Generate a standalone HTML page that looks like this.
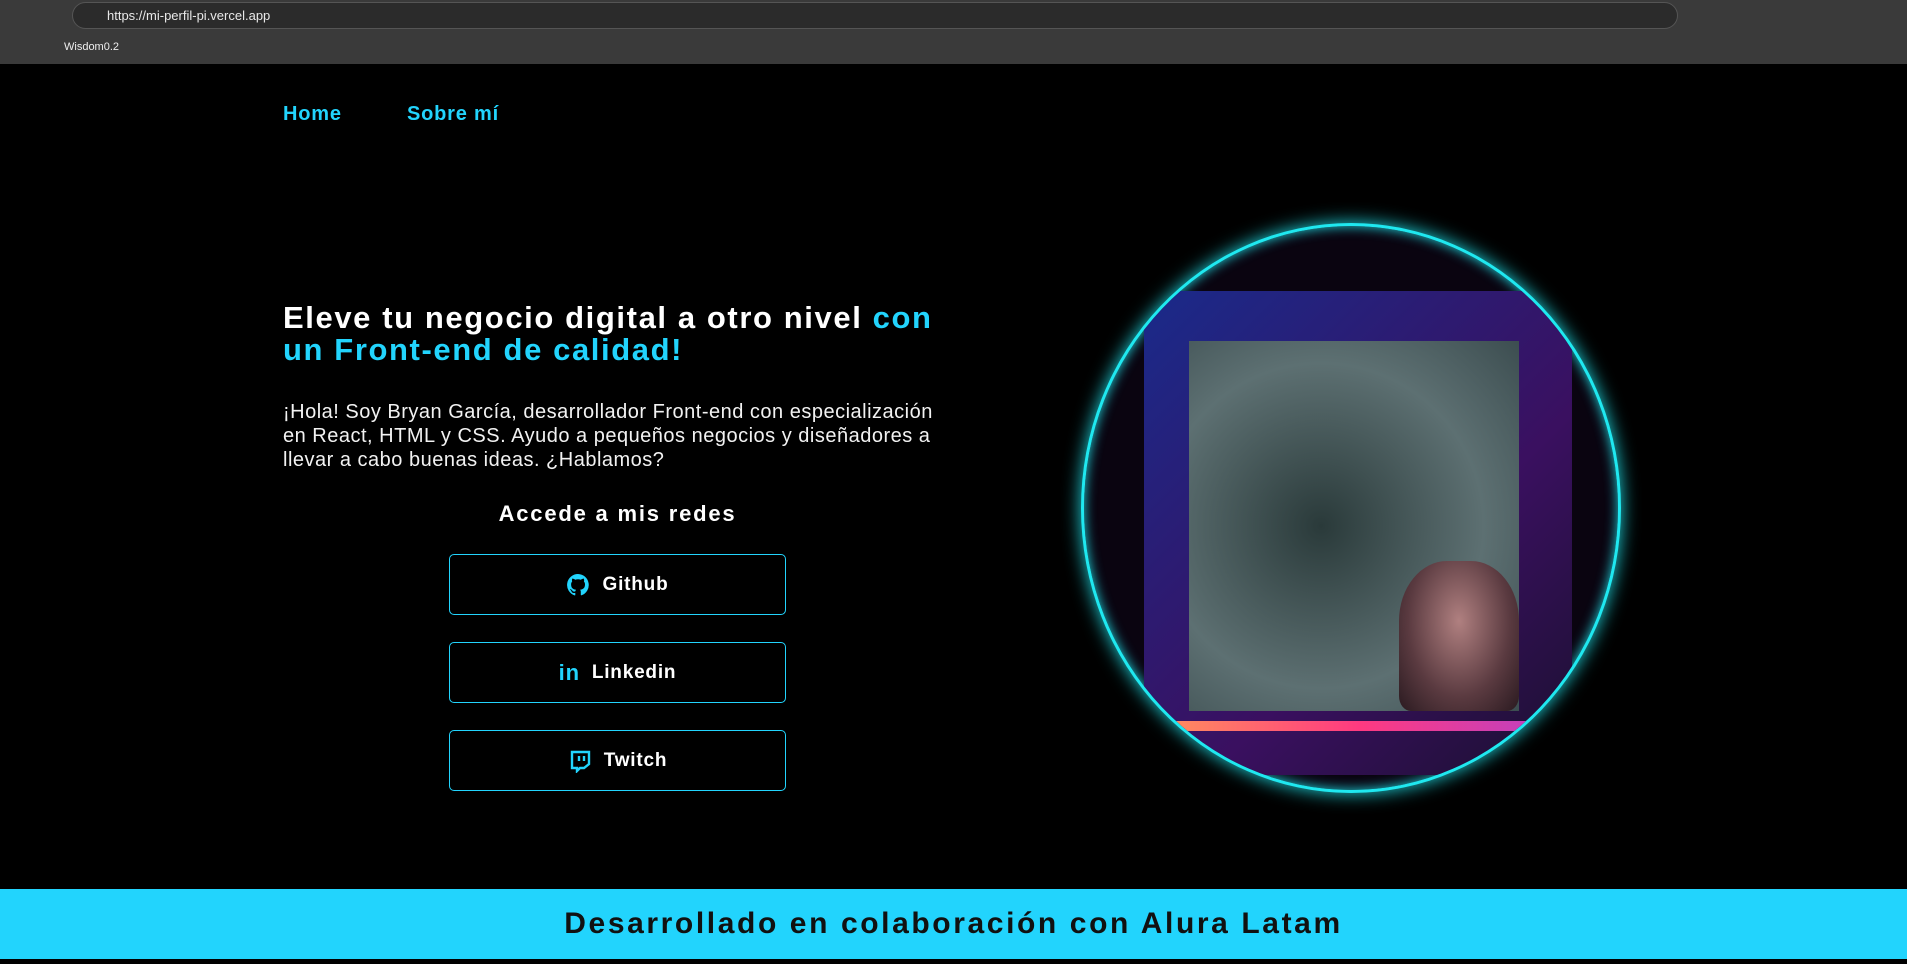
<!DOCTYPE html>
<html><head><meta charset="utf-8"><style>
*{margin:0;padding:0;box-sizing:border-box}
body{width:1907px;height:964px;background:#000;font-family:"Liberation Sans",sans-serif;overflow:hidden;position:relative;color:#fff}
.top{position:absolute;left:0;top:0;width:1907px;height:32px;background:#3a3a3a}
.url{position:absolute;left:72px;top:2px;width:1606px;height:27px;border-radius:14px;background:#2b2b2b;border:1px solid #555}
.url span{position:absolute;left:34px;top:5px;font-size:13px;color:#e8e8e8}
.bm{position:absolute;left:0;top:32px;width:1907px;height:32px;background:#3a3a3a}
.bm span{position:absolute;left:64px;top:9px;font-size:11px;color:#eee}
.nav a{position:absolute;top:103px;color:#22d4fd;font-size:20px;font-weight:bold;text-decoration:none;letter-spacing:.8px}
h1{position:absolute;left:283px;top:302px;width:720px;font-size:31px;line-height:32px;font-weight:bold;letter-spacing:1.6px}
h1 b{color:#22d4fd}
p{position:absolute;left:283px;top:400px;width:720px;font-size:20px;line-height:24px;color:#f2f2f2;letter-spacing:.5px}
h2{position:absolute;left:409px;width:417px;top:501px;text-align:center;font-size:22px;letter-spacing:1.8px}
.btn{position:absolute;left:449px;width:337px;height:61px;border:1.5px solid #22d4fd;border-radius:5px;display:flex;align-items:center;justify-content:center;gap:12px;font-size:19px;font-weight:bold;letter-spacing:.8px}
.circle{position:absolute;left:1081px;top:223px;width:540px;height:570px;border-radius:50%;border:3px solid #1fe8f0;box-shadow:0 0 18px #1fd8e0,inset 0 0 12px #1fd8e0;background:#0a0410;overflow:hidden}
.pic{position:absolute;left:60px;top:65px;width:428px;height:484px;background:linear-gradient(135deg,#1a2a8a,#3a1060 60%,#1b1030)}
.inner{position:absolute;left:45px;top:50px;width:330px;height:370px;background:radial-gradient(circle at 40% 50%,#2a3a3a,#5d7072 60%,#3c4d50)}
.face{position:absolute;left:210px;top:220px;width:120px;height:150px;background:radial-gradient(ellipse at 50% 40%,#b08080,#5a3a40 60%,#2a1a20);border-radius:40% 40% 10% 10%}
.bar{position:absolute;left:30px;top:430px;width:370px;height:10px;background:linear-gradient(90deg,#ff8a60,#ff3a80,#c040c0)}
footer{position:absolute;left:0;top:889px;width:1907px;height:70px;background:#22d4fd;color:#111;text-align:center;font-size:30px;line-height:70px;font-weight:bold;letter-spacing:2.6px}
</style></head><body>
<div class="top"><div class="url"><span>https://mi-perfil-pi.vercel.app</span></div></div>
<div class="bm"><span>Wisdom0.2</span></div>
<div class="nav"><a style="left:283px">Home</a><a style="left:407px">Sobre mí</a></div>
<h1>Eleve tu negocio digital a otro nivel <b>con<br>un Front-end de calidad!</b></h1>
<p>¡Hola! Soy Bryan García, desarrollador Front-end con especialización<br>en React, HTML y CSS. Ayudo a pequeños negocios y diseñadores a<br>llevar a cabo buenas ideas. ¿Hablamos?</p>
<h2>Accede a mis redes</h2>
<div class="btn" style="top:554px"><svg width="24" height="24" viewBox="0 0 24 24"><path fill="#22d4fd" d="M12 1a11 11 0 0 0-3.5 21.4c.6.1.8-.2.8-.5v-2c-3 .7-3.700-1.300-3.700-1.300-.5-1.300-1.200-1.600-1.200-1.600-1-.7.1-.7.1-.7 1.100.1 1.700 1.100 1.700 1.100 1 1.700 2.600 1.200 3.200.9.1-.7.4-1.200.7-1.500-2.400-.3-5-1.200-5-5.400 0-1.200.4-2.200 1.100-2.900-.1-.3-.5-1.400.1-2.900 0 0 .9-.3 3 1.100a10 10 0 0 1 5.500 0c2.100-1.400 3-1.100 3-1.100.6 1.500.2 2.600.1 2.900.7.8 1.100 1.700 1.100 2.900 0 4.200-2.600 5.100-5 5.400.4.3.8 1 .8 2v3c0 .3.2.6.8.5A11 11 0 0 0 12 1z"/></svg>Github</div>
<div class="btn" style="top:642px"><span style="color:#22d4fd;font-size:22px">in</span>Linkedin</div>
<div class="btn" style="top:730px"><svg width="24" height="24" viewBox="0 0 24 24"><path fill="none" stroke="#22d4fd" stroke-width="2.4" d="M4 3h17v12l-5 4h-4l-3 3v-3H4z M11 7v5 M16 7v5"/></svg>Twitch</div>
<div class="circle"><div class="pic"><div class="inner"><div class="face"></div></div><div class="bar"></div></div></div>
<footer>Desarrollado en colaboración con Alura Latam</footer>
</body></html>
